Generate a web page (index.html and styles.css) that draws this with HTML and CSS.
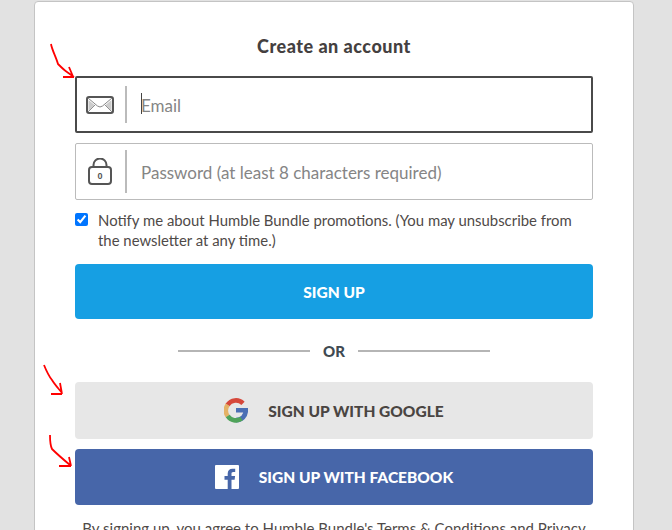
FILE: index.html
```html
<!DOCTYPE html>
<html lang="en">
<head>
<meta charset="utf-8">
<title>Create an account</title>
<link rel="stylesheet" href="styles.css">
</head>
<body>
<main class="card">
  <h1 class="title">Create an account</h1>
  <form class="form">
    <div class="field field-focus">
      <span class="field-icon">
        <svg width="28" height="18" viewBox="0 0 28 18"><rect x="1" y="1" width="26" height="16" rx="2" fill="#fff" stroke="#555" stroke-width="2"/><path d="M2 2l9.500 8q2.500 2 5 0L26 2M2 16l7-7M26 16l-7-7" fill="none" stroke="#888" stroke-width="1"/><path d="M2.500 4v11l6-6zM25.500 4v11l-6-6z" fill="#ccc"/></svg>
      </span>
      <span class="divider"></span>
      <span class="input-wrap"><span class="caret"></span><input class="input" type="email" placeholder="Email"></span>
    </div>
    <div class="field">
      <span class="field-icon">
        <svg width="24" height="27" viewBox="0 0 24 27"><path d="M5.500 9V7a6.500 6.500 0 0 1 13 0v2" fill="none" stroke="#555" stroke-width="2"/><rect x="1" y="9" width="22" height="17" rx="3" fill="#fff" stroke="#555" stroke-width="2"/><text class="lock-digit" x="12" y="21" text-anchor="middle">0</text></svg>
      </span>
      <span class="divider divider-tall"></span>
      <span class="input-wrap"><input class="input" type="password" placeholder="Password (at least 8 characters required)"></span>
    </div>
    <label class="notify">
      <input class="check" type="checkbox" checked>
      <span>Notify me about Humble Bundle promotions. (You may unsubscribe from the newsletter at any time.)</span>
    </label>
    <button class="btn btn-blue" type="button">SIGN UP</button>
    <div class="or"><span class="or-line"></span><span class="or-text">OR</span><span class="or-line"></span></div>
    <button class="btn btn-google" type="button">
      <svg class="btn-icon" width="24" height="25" viewBox="0 0 24 25">
        <path d="M12 12.300h9.800c0 5.700-4 9.800-9.800 9.800" fill="none" stroke="#4a6fb5" stroke-width="4.600"/>
        <path d="M19 5.300A10 10 0 0 0 3.500 7" fill="none" stroke="#d6483b" stroke-width="4.600"/>
        <path d="M3.700 6.800a10 10 0 0 0 0 11.400" fill="none" stroke="#e4b266" stroke-width="4.600"/>
        <path d="M3.700 18a10 10 0 0 0 13.800 2.700" fill="none" stroke="#4fa35a" stroke-width="4.600"/>
      </svg>
      <span>SIGN UP WITH GOOGLE</span>
    </button>
    <button class="btn btn-facebook" type="button">
      <svg class="btn-icon" width="24" height="24" viewBox="0 0 24 24">
        <rect width="24" height="24" rx="1" fill="#fff"/>
        <path d="M16.500 24v-9.300h3.100l.5-3.600h-3.600V8.800c0-1 .3-1.800 1.800-1.800h1.900V3.800c-.3 0-1.500-.1-2.800-.1-2.800 0-4.700 1.700-4.700 4.800v2.600H9.500v3.600h3.200V24z" fill="#4766a9"/>
      </svg>
      <span>SIGN UP WITH FACEBOOK</span>
    </button>
  </form>
  <p class="terms">By signing up, you agree to Humble Bundle's Terms &amp; Conditions and Privacy</p>
</main>
<svg class="arrow arrow-1" width="26" height="36" viewBox="0 0 26 36"><path d="M1 1c1 6 5 13 7 20 3 3 6 6 9 8l7 5M19 24l4 9.500M13 34h11" fill="none" stroke="#f00" stroke-width="1.800"/></svg>
<svg class="arrow arrow-2" width="26" height="36" viewBox="0 0 26 36"><path d="M1 1c2 5 4 10 8 15 3 5 7 9 10 13M17 19l2 11M8 30h11" fill="none" stroke="#f00" stroke-width="1.800"/></svg>
<svg class="arrow arrow-3" width="26" height="36" viewBox="0 0 26 36"><path d="M1 1c0 5 0 10 2 14 6 6 12 11 18 16M20 23l2 9M10 32h12" fill="none" stroke="#f00" stroke-width="1.800"/></svg>
</body>
</html>
```
FILE: styles.css
```css
* { box-sizing: border-box; }
html, body { margin: 0; height: 530px; overflow: hidden; }
body {
  position: relative;
  background: #e2e2e2;
  font-family: "Lato", "Liberation Sans", sans-serif;
  color: #4a4a4a;
}
.card {
  width: 600px;
  height: 560px;
  margin: 1px 0 0 34px;
  padding: 0 40px;
  background: #fff;
  border: 1px solid #c4c4c4;
  border-radius: 4px;
}
.title {
  margin: 34px 0 0;
  height: 20px;
  line-height: 20px;
  text-align: center;
  font-size: 18px;
  font-weight: 900;
  letter-spacing: .5px;
  color: #444040;
}
.form { display: flex; flex-direction: column; margin-top: 20px; }
.field {
  display: flex;
  align-items: center;
  height: 57px;
  border: 1px solid #bbb;
  border-radius: 2px;
  background: #fff;
  padding: 0 1px;
}
.field + .field { margin-top: 10px; }
.field-focus { border: 2px solid #4a4a4a; padding: 0; }
.field-icon { width: 48px; padding-right: 2px; display: flex; justify-content: center; flex: none; }
.divider { width: 2px; height: 37px; background: #bbb; flex: none; }
.divider-tall { height: 43px; }
.input-wrap { position: relative; flex: 1; display: flex; padding: 2px 0 0 14px; }
.caret { position: absolute; left: 14px; top: 0; width: 1px; height: 21px; background: #444; }
.input {
  flex: 1;
  border: 0;
  outline: 0;
  padding: 0;
  font: 400 17px/21px "Lato", "Liberation Sans", sans-serif;
  background: transparent;
}
.input::placeholder { color: #858585; opacity: 1; }
.notify {
  display: flex;
  align-items: flex-start;
  gap: 10px;
  margin-top: 10px;
  font-size: 14.900px;
  line-height: 20px;
  color: #4f4a48;
}
.check { width: 13px; height: 13px; margin: 3px 0 0; flex: none; accent-color: #0075ff; }
.btn {
  display: flex;
  align-items: center;
  justify-content: center;
  width: 100%;
  border: 0;
  border-radius: 4px;
  font-family: "Lato", "Liberation Sans", sans-serif;
  font-size: 15.500px;
  font-weight: 900;
  padding: 0;
}
.btn-blue { height: 55px; margin-top: 14px; background: #169fe3; color: #fff; }
.or { display: flex; align-items: center; justify-content: center; gap: 13px; height: 18px; margin-top: 23px; }
.or-line { width: 132px; height: 2px; background: #b5b5b5; }
.or-text { font-size: 15px; font-weight: 900; color: #3f4a52; width: 22px; text-align: center; }
.btn-google { height: 57px; margin-top: 22px; background: #e7e7e7; color: #4a4542; gap: 20px; }
.btn-facebook { height: 56px; margin-top: 10px; background: #4766a9; color: #fff; gap: 20px; }
.btn-icon { flex: none; }
.lock-digit { font: 700 9px "Liberation Sans", sans-serif; fill: #555; }
.terms {
  margin: 13px 0 0;
  text-align: center;
  font-size: 15px;
  line-height: 20px;
  white-space: nowrap;
  color: #4f4a48;
}
.arrow { position: absolute; }
.arrow-1 { left: 50px; top: 43px; }
.arrow-2 { left: 43px; top: 364px; }
.arrow-3 { left: 49px; top: 434px; }
```
